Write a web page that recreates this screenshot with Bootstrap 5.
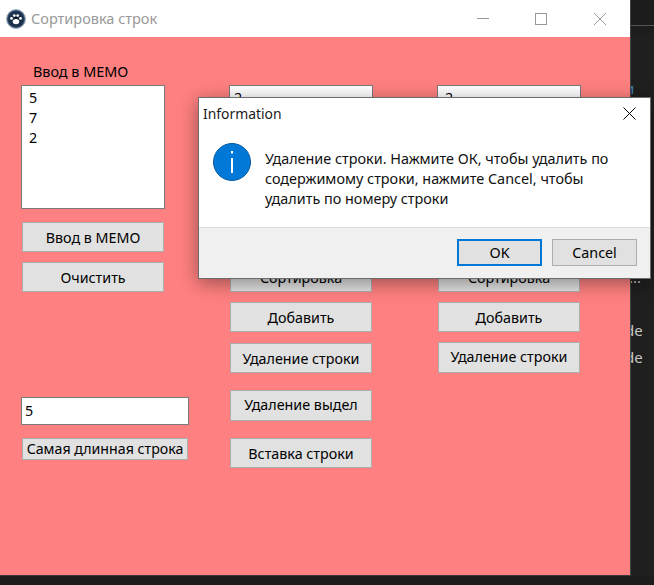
<!DOCTYPE html>
<html lang="ru">
<head>
<meta charset="utf-8">
<link href="https://cdn.jsdelivr.net/npm/bootstrap@5.3.0/dist/css/bootstrap.min.css" rel="stylesheet">
<style>
html,body{width:654px;height:585px;overflow:hidden;margin:0}
body{background:#1c1c1c;font-family:"Noto Sans","Open Sans",sans-serif;font-size:14.3px;color:#000;line-height:1}
.desk{position:relative;width:654px;height:585px;overflow:hidden}
.strip{position:absolute;left:630px;top:33px;width:24px;height:543px;background:#1f1f1f}
.strip-line{position:absolute;left:630px;top:25px;width:24px;height:1px;background:#555}
.strip-txt{position:absolute;left:625px;color:#c8c8c8;font-size:15px;white-space:nowrap}
.t1{top:81px;left:625px;color:#3f7fb5}
.t2{top:270px}
.t3{top:323px}
.t4{top:350px}
.win{position:absolute;left:0;top:0;width:631px;height:576px;display:flex;flex-direction:column;border-right:1px solid #444;border-bottom:1px solid #3a3a3a}
.titlebar{height:37px;flex:none;background:#fff;color:#999;font-size:14.5px;padding-left:6px;gap:5px}
.winbtns{margin-left:auto;display:flex}
.winbtn{width:58px;height:37px;display:flex;align-items:center;justify-content:center}
.winbtn-last{width:60px}
.client{flex:1;background:#ff8080;display:flex;position:relative}
.colA{flex:none;width:229px;padding:27px 0 0 21px}
.colB{flex:none;width:208px;padding-top:48px}
.colC{flex:none;width:193px;padding-top:48px}
.lbl{padding-left:12px;height:21px;line-height:15px;font-size:14.4px}
.memo{width:144px;height:124px;background:#fff;border:1px solid #7a7a7a;padding:2px 7px;line-height:20px}
.memo-b{padding-left:4px}
.wbtn{display:flex;align-items:center;justify-content:center;width:142px;height:30px;background:#e1e1e1;border:1px solid #adadad;color:#000;margin-left:1px;white-space:nowrap;padding-top:2px}
.gap-13{margin-top:13px}
.gap-10{margin-top:10px}
.gap-11{margin-top:11px}
.gap-17{margin-top:17px}
.gap-53{margin-top:53px}
.gap-105{margin-top:105px}
.tall{height:31px;padding-top:0}
.edit{width:168px;height:28px;background:#fff;border:1px solid #7a7a7a;padding:0 3px;display:flex;align-items:center}
.wide{width:166px;height:22px;font-size:14.2px;margin-left:1px;padding-top:0}
.dlg{position:absolute;left:198px;top:97px;width:453px;height:182px;background:#fff;border:1px solid #6b6b6b;box-shadow:0 4px 18px rgba(0,0,0,.4);display:flex;flex-direction:column}
.dlg-title{height:33px;flex:none;padding:0 14px 2px 4px;font-size:13.9px;color:#1a1a1a}
.dlg-body{flex:1;padding:12px 0 0 14px;gap:14px;line-height:20px;font-size:14.4px;color:#111}
.dlg-msg{margin-top:6px}
.dlg-foot{height:51px;flex:none;background:#f0f0f0;border-top:1px solid #dfdfdf;padding:11px 13px 0 0;gap:10px;justify-content:flex-end}
.dbtn{width:85px;height:27px;background:#e1e1e1;border:1px solid #adadad;display:flex;align-items:center;justify-content:center;padding-top:1px}
.dbtn-on{border:2px solid #0078d7}
</style>
</head>
<body>
<div class="desk">
  <div class="strip"></div>
  <div class="strip-line"></div>
  <span class="strip-txt t1">и</span>
  <span class="strip-txt t2">....</span>
  <span class="strip-txt t3">de</span>
  <span class="strip-txt t4">de</span>
  <div class="win">
    <div class="titlebar d-flex align-items-center">
      <svg width="20" height="20" viewBox="0 0 20 20">
        <defs><radialGradient id="ball" cx=".5" cy=".5" r=".55"><stop offset="0" stop-color="#0a1626"/><stop offset=".7" stop-color="#1c3350"/><stop offset="1" stop-color="#5f7f9f"/></radialGradient></defs>
        <circle cx="10" cy="10" r="9.5" fill="url(#ball)" stroke="#a9b6c4" stroke-width="1"/>
        <ellipse cx="10" cy="12.6" rx="3.3" ry="2.7" fill="#fff"/><circle cx="5.5" cy="9.4" r="1.4" fill="#fff"/><circle cx="8.3" cy="6.6" r="1.4" fill="#fff"/><circle cx="11.7" cy="6.6" r="1.4" fill="#fff"/><circle cx="14.5" cy="9.4" r="1.4" fill="#fff"/>
      </svg>
      <span>Сортировка строк</span>
      <div class="winbtns">
        <div class="winbtn"><svg width="12" height="12"><path d="M0 5.5h12" stroke="#999"/></svg></div>
        <div class="winbtn"><svg width="12" height="12"><rect x=".5" y=".5" width="11" height="11" fill="none" stroke="#999"/></svg></div>
        <div class="winbtn winbtn-last"><svg width="12" height="12"><path d="M0 0l12 12M12 0L0 12" stroke="#999"/></svg></div>
      </div>
    </div>
    <div class="client">
      <div class="colA">
        <div class="lbl">Ввод в МЕМО</div>
        <div class="memo">5<br>7<br>2</div>
        <div class="wbtn gap-13">Ввод в МЕМО</div>
        <div class="wbtn gap-10">Очистить</div>
        <div class="edit gap-105">5</div>
        <div class="wbtn wide gap-13">Самая длинная строка</div>
      </div>
      <div class="colB">
        <div class="memo memo-b">2</div>
        <div class="wbtn gap-53">Сортировка</div>
        <div class="wbtn gap-10">Добавить</div>
        <div class="wbtn gap-11">Удаление строки</div>
        <div class="wbtn tall gap-17">Удаление выдел</div>
        <div class="wbtn gap-17">Вставка строки</div>
      </div>
      <div class="colC">
        <div class="memo">2</div>
        <div class="wbtn gap-53">Сортировка</div>
        <div class="wbtn gap-10">Добавить</div>
        <div class="wbtn tall gap-10">Удаление строки</div>
      </div>
    </div>
  </div>
  <div class="dlg">
    <div class="dlg-title d-flex align-items-center justify-content-between">
      <span>Information</span>
      <svg width="13" height="13"><path d="M.5.5l12 12M12.5.5l-12 12" stroke="#000"/></svg>
    </div>
    <div class="dlg-body d-flex">
      <svg class="flex-shrink-0" width="38" height="38" viewBox="0 0 38 38"><circle cx="19" cy="19" r="18.5" fill="#0078d7" stroke="#075a9e"/><path d="M19 8v2.4M19 15v15" stroke="#fff" stroke-width="2"/></svg>
      <div class="dlg-msg">Удаление строки. Нажмите ОК, чтобы удалить по<br>содержимому строки, нажмите Cancel, чтобы<br>удалить по номеру строки</div>
    </div>
    <div class="dlg-foot d-flex"><div class="dbtn dbtn-on">OK</div><div class="dbtn">Cancel</div></div>
  </div>
</div>
</body>
</html>
